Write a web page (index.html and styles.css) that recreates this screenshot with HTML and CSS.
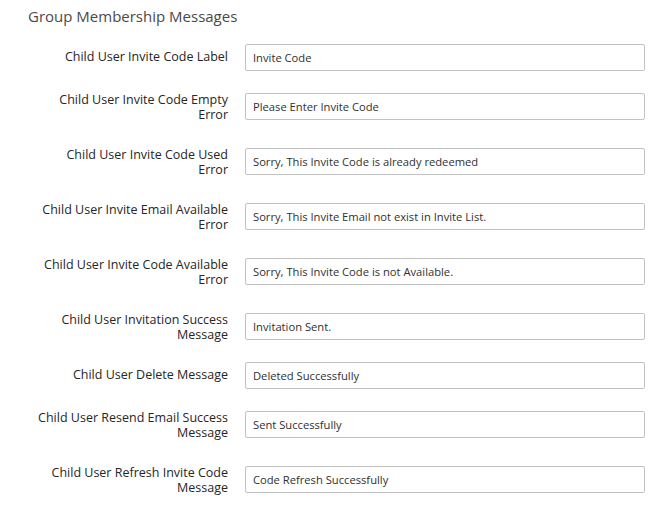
FILE: index.html
```html
<!DOCTYPE html>
<html lang="en">
<head>
<meta charset="utf-8">
<title>Group Membership Messages</title>
<link rel="stylesheet" href="styles.css">
</head>
<body>
<section class="fieldset">
  <h2 class="fieldset-title">Group Membership Messages</h2>
  <div class="fields">
    <div class="field">
      <label class="field-label" for="f1">Child User Invite Code Label</label>
      <input class="field-input" id="f1" type="text" value="Invite Code">
    </div>
    <div class="field">
      <label class="field-label" for="f2">Child User Invite Code Empty Error</label>
      <input class="field-input" id="f2" type="text" value="Please Enter Invite Code">
    </div>
    <div class="field">
      <label class="field-label" for="f3">Child User Invite Code Used Error</label>
      <input class="field-input" id="f3" type="text" value="Sorry, This Invite Code is already redeemed">
    </div>
    <div class="field">
      <label class="field-label" for="f4">Child User Invite Email Available Error</label>
      <input class="field-input" id="f4" type="text" value="Sorry, This Invite Email not exist in Invite List.">
    </div>
    <div class="field">
      <label class="field-label" for="f5">Child User Invite Code Available Error</label>
      <input class="field-input" id="f5" type="text" value="Sorry, This Invite Code is not Available.">
    </div>
    <div class="field">
      <label class="field-label" for="f6">Child User Invitation Success Message</label>
      <input class="field-input" id="f6" type="text" value="Invitation Sent.">
    </div>
    <div class="field">
      <label class="field-label" for="f7">Child User Delete Message</label>
      <input class="field-input" id="f7" type="text" value="Deleted Successfully">
    </div>
    <div class="field">
      <label class="field-label" for="f8">Child User Resend Email Success Message</label>
      <input class="field-input" id="f8" type="text" value="Sent Successfully">
    </div>
    <div class="field">
      <label class="field-label" for="f9">Child User Refresh Invite Code Message</label>
      <input class="field-input" id="f9" type="text" value="Code Refresh Successfully">
    </div>
  </div>
</section>
</body>
</html>
```
FILE: styles.css
```css
html, body {
  margin: 0;
  padding: 0;
  background: #ffffff;
}

body {
  font-family: "Open Sans", "Noto Sans", "Liberation Sans", sans-serif;
  color: #303030;
}

.fieldset {
  padding-top: 6px;
}

.fieldset-title {
  margin: 0 0 18px 28px;
  font-size: 15px;
  font-weight: 400;
  line-height: 20px;
  color: #4a4a4a;
}

.fields {
  display: flex;
  flex-direction: column;
  gap: 16px;
}

.field {
  display: grid;
  grid-template-columns: 228px 400px;
  column-gap: 17px;
  align-items: center;
}

.field-label {
  align-self: start;
  box-sizing: border-box;
  padding: 4.5px 0 4.5px 38px;
  font-size: 12.5px;
  line-height: 15px;
  text-align: right;
  color: #262626;
}

.field-input {
  box-sizing: border-box;
  width: 400px;
  height: 27px;
  margin: 0;
  padding: 0 7px;
  border: 1px solid #c2c2c2;
  border-radius: 2px;
  background: #ffffff;
  font-family: "Open Sans", "Noto Sans", "Liberation Sans", sans-serif;
  font-size: 11.2px;
  color: #303030;
  outline: none;
}
```
